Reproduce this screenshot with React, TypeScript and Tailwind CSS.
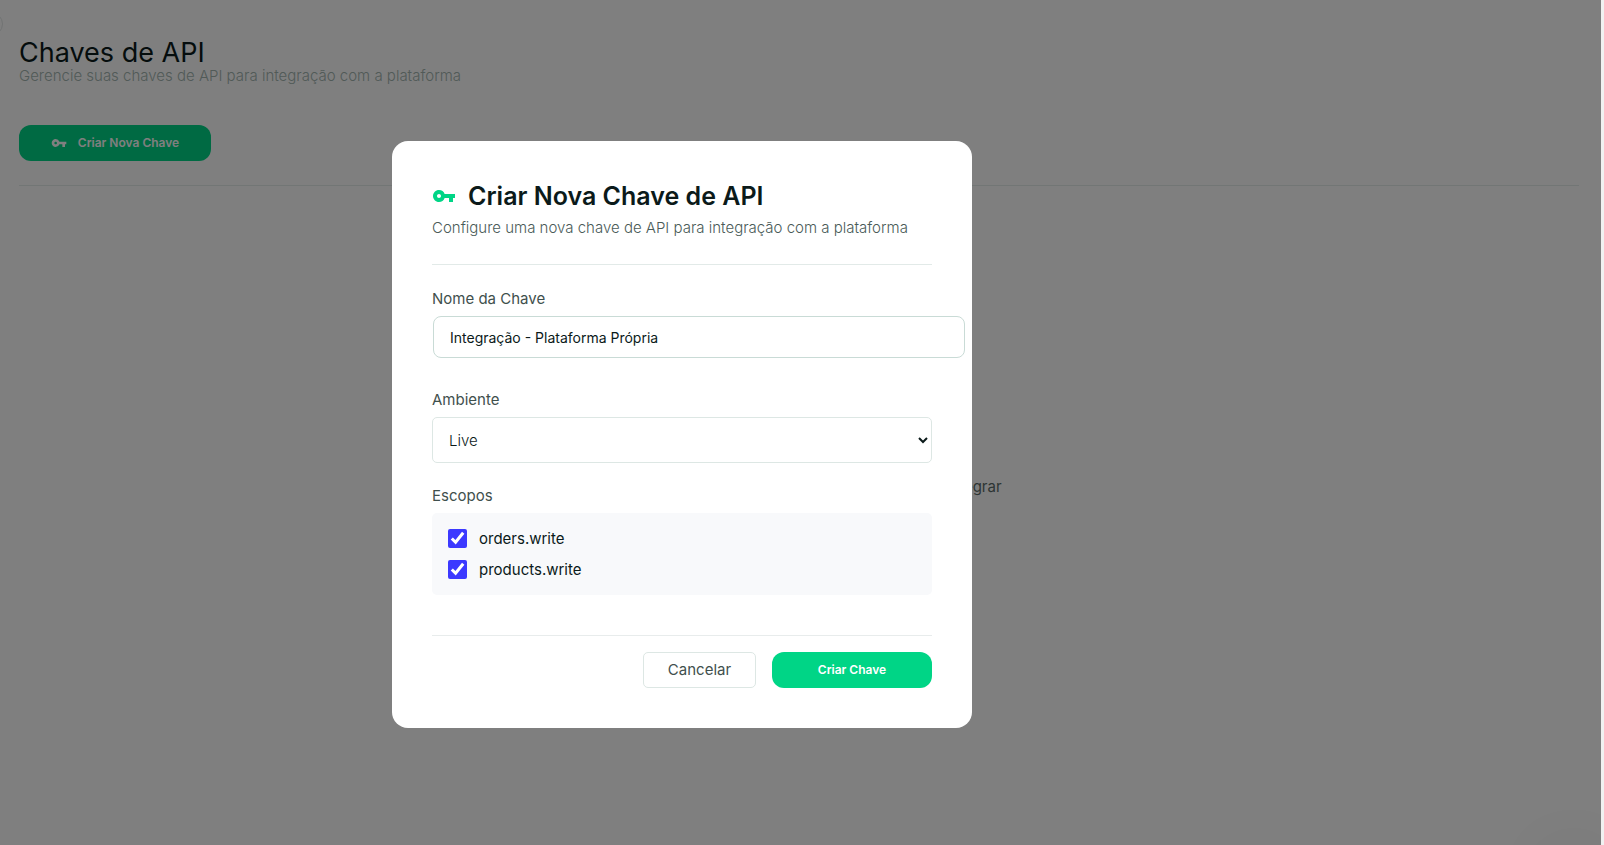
import { useState } from "react";
import { MdVpnKey } from "react-icons/md";

const scopes = ["orders.write", "products.write"];

function PageContent() {
  return (
    <main className="flex min-h-screen flex-col pt-9 pr-[22px] pl-[19px]">
      <header className="flex flex-col">
        <h1 className="text-[27px] leading-[34px] text-[#0b1a1a]">Chaves de API</h1>
        <p className="text-[15px] leading-3 font-light text-[#a3b5b0]">
          Gerencie suas chaves de API para integração com a plataforma
        </p>
      </header>
      <button
        type="button"
        className="mt-[43px] flex h-9 w-48 items-center justify-center gap-[11px] rounded-xl bg-[#00d586] text-xs font-semibold text-white"
      >
        <MdVpnKey className="size-4" aria-hidden="true" />
        Criar Nova Chave
      </button>
      <hr className="mt-6 border-[#e5eceb]" />
      <p className="mt-[289px] text-center text-[15px] leading-6 text-[#5a6b68]">
        Crie a sua primeira chave de API para começar a integrar
      </p>
    </main>
  );
}

function CreateKeyDialog() {
  const [name, setName] = useState("Integração - Plataforma Própria");
  return (
    <div className="fixed inset-y-0 right-[3px] left-0 flex items-center justify-center bg-black/50 pt-6 pr-[237px]">
      <form
        role="dialog"
        aria-labelledby="dialog-title"
        className="flex w-[580px] flex-col rounded-2xl bg-white p-10"
        onSubmit={(e) => e.preventDefault()}
      >
        <h2 id="dialog-title" className="flex items-center gap-3 text-[25px] leading-[30px] font-semibold text-[#0b1a1a]">
          <MdVpnKey className="size-6 text-[#00d586]" aria-hidden="true" />
          Criar Nova Chave de API
        </h2>
        <p className="mt-[5px] text-[15px] leading-6 font-light text-[#4a5b58]">
          Configure uma nova chave de API para integração com a plataforma
        </p>
        <hr className="mt-6 border-[#e2eae8]" />

        <label htmlFor="key-name" className="mt-6 text-[15px] leading-5 text-[#3f504d]">
          Nome da Chave
        </label>
        <input
          id="key-name"
          value={name}
          onChange={(e) => setName(e.target.value)}
          className="mt-[7px] ml-px h-[42px] w-[532px] rounded-lg border border-[#c9dbd6] px-4 text-sm text-[#0b1a1a] outline-none"
        />

        <label htmlFor="environment" className="mt-8 text-[15px] leading-5 text-[#3f504d]">
          Ambiente
        </label>
        <select
          id="environment"
          className="mt-[7px] h-[46px] w-full rounded-[5px] border border-[#dde7e4] bg-white px-3 text-[15px] font-light text-[#0b1a1a]"
        >
          <option>Live</option>
        </select>

        <fieldset className="mt-[23px]">
          <legend className="text-[15px] leading-5 text-[#3f504d]">Escopos</legend>
          <div className="mt-[7px] flex flex-col gap-3 rounded-[5px] bg-[#f8f9fb] p-4">
            {scopes.map((scope) => (
              <label key={scope} className="flex items-center gap-3 text-[15px] leading-[19px] text-[#0b1a1a]">
                <input type="checkbox" defaultChecked className="size-[19px] accent-[#3c39ff]" />
                {scope}
              </label>
            ))}
          </div>
        </fieldset>

        <hr className="mt-10 border-[#e8ecec]" />
        <div className="mt-4 flex justify-end gap-4">
          <button
            type="button"
            className="h-9 w-[113px] rounded-[5px] border border-[#dde7e4] text-[15px] text-[#3f504d]"
          >
            Cancelar
          </button>
          <button type="submit" className="h-9 w-40 rounded-xl bg-[#00d586] text-xs font-semibold text-white">
            Criar Chave
          </button>
        </div>
      </form>
    </div>
  );
}

export default function App() {
  return (
    <div className="flex min-h-screen overflow-hidden bg-white font-['Inter','Liberation_Sans',sans-serif]">
      <div className="relative grow overflow-hidden">
        <PageContent />
        <button
          type="button"
          aria-label="Recolher menu"
          className="absolute top-3 -left-[21px] size-6 rounded-full border border-[#e2e6e6]"
        />
        <div className="absolute right-5 -bottom-10 size-[14px] rounded-full shadow-[0_0_60px_40px_rgba(0,0,0,0.04)]" />
      </div>
      <div className="w-[3px] shrink-0 bg-[#f1f1f1]" />
      <CreateKeyDialog />
    </div>
  );
}
